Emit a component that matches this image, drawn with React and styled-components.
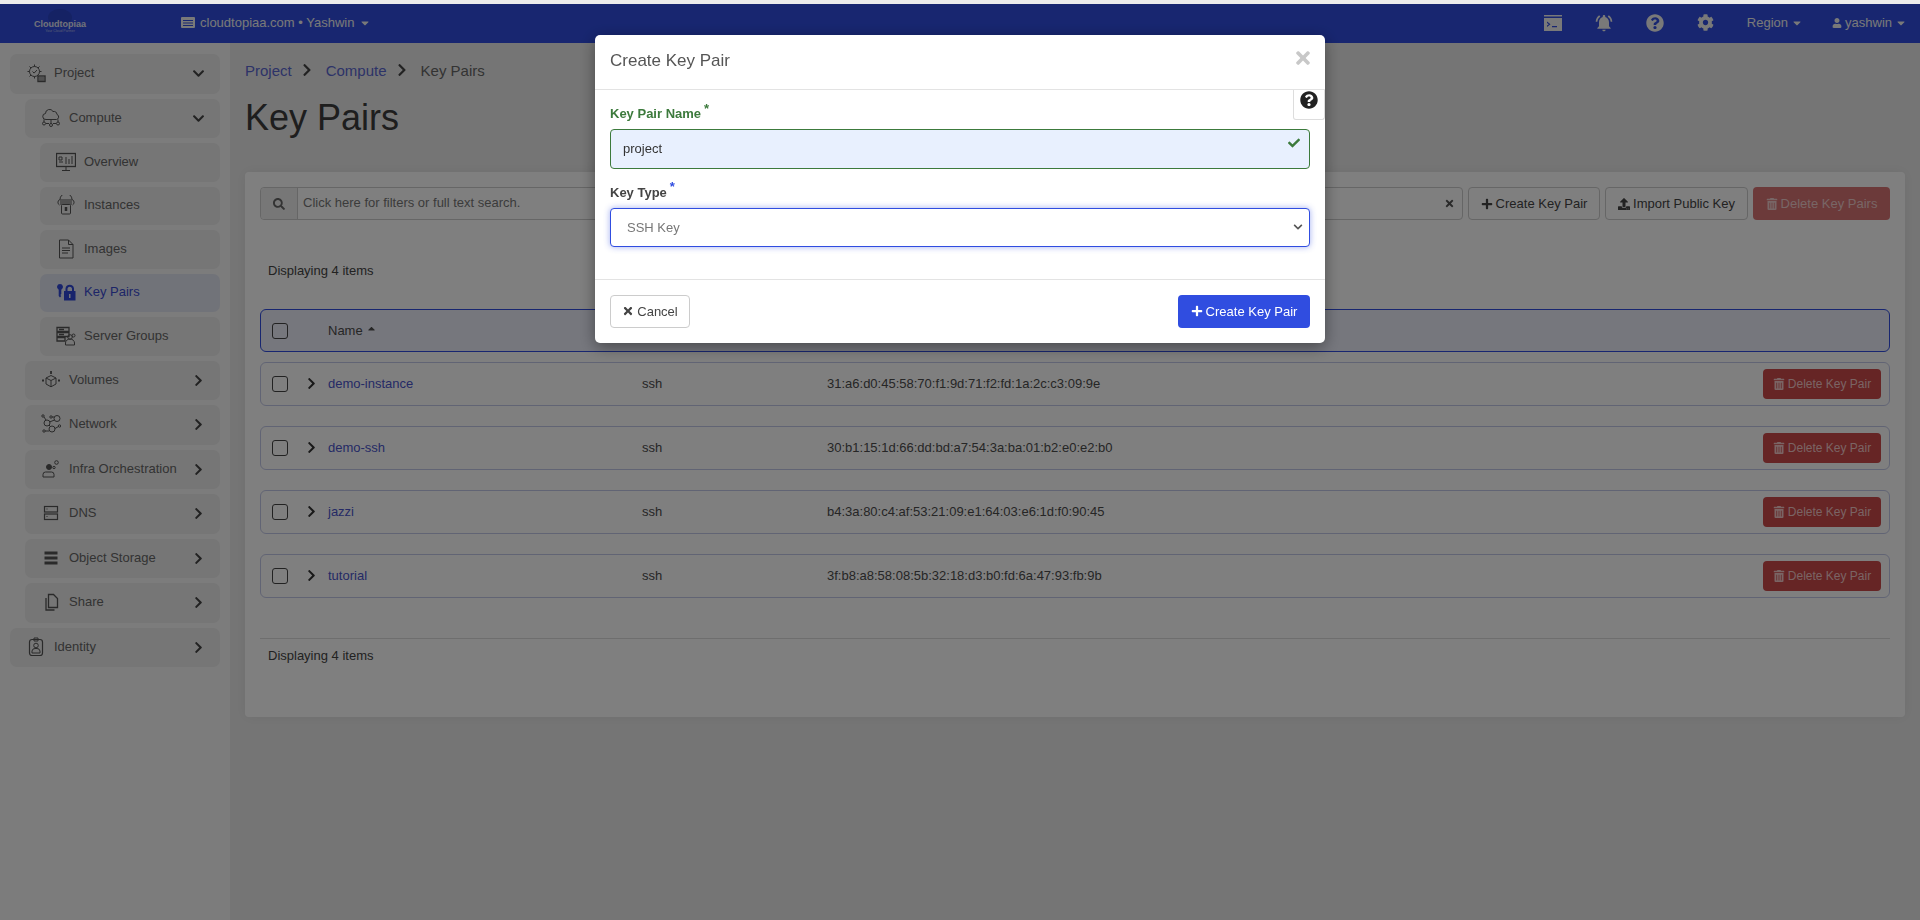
import React from 'react';
import styled, { createGlobalStyle } from 'styled-components';
import {
  FaCaretDown, FaCaretUp, FaCheck, FaChevronDown, FaChevronRight, FaCog, FaPlus,
  FaQuestionCircle, FaSearch, FaTimes, FaTrashAlt, FaUpload, FaUser,
} from 'react-icons/fa';
import { MdNotificationsActive } from 'react-icons/md';

const Global = createGlobalStyle`
  html, body { margin: 0; padding: 0; height: 100%; overflow: hidden; }
  body { font-family: "Liberation Sans", Arial, sans-serif; font-size: 13px; background: #f0f0f0; }
  * { box-sizing: border-box; }
`;

const TopStrip = styled.div`
  height: 4px;
  background: #ececec;
`;

const Navbar = styled.header`
  height: 39px;
  background: #304de0;
  color: #f2f2f2;
  display: flex;
  align-items: center;
  padding: 0 13px 2px 34px;
`;

const Logo = styled.div`
  position: relative;
  width: 52px;
  margin-top: 8px;
  text-align: center;
  line-height: 1;
  &::before {
    content: '';
    position: absolute;
    left: 14px;
    top: -11px;
    width: 24px;
    height: 17px;
    border-radius: 50%;
    background: #2a44c8;
  }
`;

const LogoName = styled.div`
  position: relative;
  font-size: 9px;
  font-weight: 700;
  color: #e4e6f4;
`;

const LogoTag = styled.div`
  position: relative;
  font-size: 3.5px;
  margin-top: 1px;
  color: #b4bcea;
`;

const Project = styled.div`
  display: flex;
  align-items: center;
  gap: 5px;
  margin-left: 95px;
`;

const NavRight = styled.div`
  margin-left: auto;
  display: flex;
  align-items: center;
`;

const NavIcon = styled.span`
  display: flex;
  align-items: center;
  justify-content: center;
  width: 20px;
  margin-right: ${(p) => p.$gap}px;
  font-size: 18px;
`;

const NavMenu = styled.div`
  display: flex;
  align-items: center;
  gap: 3px;
  margin-left: ${(p) => p.$left || 0}px;
`;

const Body = styled.div`
  display: grid;
  grid-template-columns: 230px 1fr;
  height: calc(100vh - 43px);
`;

const Sidebar = styled.nav`
  background: #f8f8f8;
  padding: 11px 10px 0;
  display: flex;
  flex-direction: column;
  gap: 5px;
`;

const NavItem = styled.div`
  height: ${(p) => (p.$level === 2 ? 38.5 : 39.5)}px;
  margin-left: ${(p) => p.$level * 15}px;
  padding: 0 16px 2px;
  border-radius: 7px;
  background: ${(p) => (p.$active ? '#e2e6f2' : '#ececec')};
  color: ${(p) => (p.$active ? '#3a4bd0' : '#666')};
  display: flex;
  align-items: center;
  gap: 8px;
  svg.side { width: 20px; height: 20px; flex: none; margin-top: 1px; color: ${(p) => (p.$active ? '#3049d8' : '#555')}; }
`;

const NavLabel = styled.span`
  flex: 1;
  white-space: nowrap;
`;

const Chevron = styled.span`
  display: flex;
  margin: 2px -1px 0 0;
  color: #444;
  font-size: 13px;
`;

const Main = styled.main`
  background: #ebebeb;
  padding: 17px 15px 0;
`;

const Crumbs = styled.div`
  display: flex;
  align-items: center;
  height: 20px;
  font-size: 15px;
  color: #666;
`;

const Crumb = styled.a`
  color: #5a66d0;
`;

const CrumbSep = styled.span`
  display: flex;
  margin: 0 12px 0 8px;
  font-size: 14px;
  color: #444;
`;

const Title = styled.h1`
  margin: 18px 0 0;
  font-size: 36px;
  line-height: 40px;
  font-weight: 400;
  color: #3c3c3c;
`;

const Panel = styled.section`
  margin-top: 34px;
  height: 545px;
  background: #fff;
  border-radius: 4px;
  padding: 15px;
  box-shadow: 0 0 14px rgba(0, 0, 0, 0.06);
`;

const Toolbar = styled.div`
  display: flex;
  gap: 5px;
  height: 33px;
`;

const SearchGroup = styled.div`
  flex: 1;
  display: flex;
  align-items: center;
  border: 1px solid #ccc;
  border-radius: 4px;
  color: #777;
  padding-right: 7px;
`;

const SearchAddon = styled.span`
  width: 37px;
  align-self: stretch;
  display: flex;
  align-items: center;
  justify-content: center;
  background: #eee;
  border-right: 1px solid #ccc;
  border-radius: 4px 0 0 4px;
  color: #666;
  font-size: 12px;
`;

const SearchInput = styled.input`
  flex: 1;
  border: 0;
  outline: 0;
  padding: 0 5px;
  background: transparent;
  font: 13px "Liberation Sans", Arial, sans-serif;
  margin-top: -2px;
  &::placeholder { color: #777; opacity: 1; }
`;

const ClearIcon = styled.span`
  display: flex;
  color: #555;
  font-size: 11px;
`;

const Button = styled.button`
  display: inline-flex;
  align-items: center;
  justify-content: center;
  gap: 3px;
  height: ${(p) => p.$h || 33}px;
  width: ${(p) => p.$w}px;
  padding: 0;
  border-radius: 4px;
  border: 1px solid ${(p) => (p.$kind === 'default' ? '#ccc' : 'transparent')};
  font: ${(p) => p.$size || 13}px "Liberation Sans", Arial, sans-serif;
  color: ${(p) => (p.$kind === 'default' ? '#444' : '#fff')};
  background: ${(p) =>
    p.$kind === 'primary' ? '#304de0'
      : p.$kind === 'danger' ? '#d9534f'
        : p.$kind === 'soft' ? '#d87474' : '#fff'};
  svg { flex: none; font-size: 12px; }
`;

const DeleteAll = styled(Button)`
  color: #f0cccc;
`;

const RowDelete = styled(Button)`
  background: #cc4a4a;
  color: #f4c8c8;
`;

const Count = styled.div`
  margin: ${(p) => p.$top}px 0 0 8px;
  line-height: 16px;
  color: #444;
`;

const Row = styled.div`
  display: grid;
  grid-template-columns: 35px 21px 314px 185px 1fr auto;
  align-items: center;
  height: 43.5px;
  margin-bottom: 20.5px;
  padding: 0 8px 0 11px;
  border: 1px solid #c3c9e8;
  border-radius: 6px;
  color: #4c4c4c;
  font-size: 13px;
`;

const HeadRow = styled(Row)`
  height: 43px;
  margin-top: 30px;
  margin-bottom: 10px;
  border-color: #304de0;
  background: #eceefa;
`;

const Check = styled.input.attrs({ type: 'checkbox' })`
  appearance: none;
  width: 16px;
  height: 16px;
  margin: 0;
  border: 1.5px solid #444;
  border-radius: 3px;
  background: transparent;
`;

const Expand = styled.span`
  display: flex;
  color: #333;
  font-size: 13px;
  margin-left: -2px;
`;

const NameLink = styled.a`
  color: #4a55cc;
`;

const SortName = styled.span`
  grid-column: 3;
  display: flex;
  align-items: center;
  gap: 3px;
  svg { font-size: 11px; margin-top: -5px; }
`;

const Divider = styled.div`
  border-top: 1px solid #ddd;
  margin-top: 40px;
`;

const Overlay = styled.div`
  position: fixed;
  inset: 4px 0 0;
  background: rgba(0, 0, 0, 0.5);
  display: flex;
  justify-content: center;
  align-items: flex-start;
`;

const Modal = styled.div`
  position: relative;
  width: 730px;
  margin-top: 31px;
  background: #fff;
  border-radius: 5px;
  box-shadow: 0 4px 16px rgba(0, 0, 0, 0.4);
`;

const ModalHead = styled.div`
  height: 55px;
  padding: 0 15px 3px;
  border-bottom: 1px solid #e3e3e3;
  display: flex;
  align-items: center;
  justify-content: space-between;
`;

const ModalTitle = styled.h4`
  margin: 0;
  font-size: 17px;
  font-weight: 400;
  color: #555;
`;

const Close = styled.span`
  display: flex;
  margin: -6px -3px 0 0;
  color: #c8c8c8;
  font-size: 20px;
`;

const HelpTab = styled.div`
  position: absolute;
  top: 55px;
  right: 0;
  width: 32px;
  height: 30px;
  border: 1px solid #ddd;
  border-top: 0;
  border-radius: 0 0 3px 3px;
  display: flex;
  justify-content: center;
  padding-top: 1px;
  font-size: 18px;
  color: #222;
`;

const ModalBody = styled.div`
  padding: 15px 15px 32px;
`;

const Label = styled.label`
  display: block;
  height: 24px;
  line-height: 18px;
  font-weight: 700;
  color: ${(p) => (p.$ok ? '#3c7a3c' : '#444')};
  sup {
    font-size: 13px;
    line-height: 0;
    margin-left: 3px;
    color: ${(p) => (p.$ok ? '#3c7a3c' : '#304de0')};
  }
`;

const FieldWrap = styled.div`
  position: relative;
  margin-bottom: ${(p) => p.$mb || 0}px;
`;

const TextInput = styled.input`
  display: block;
  width: 100%;
  height: 39.5px;
  padding: 0 12px;
  border: 1px solid #3c7a3c;
  border-radius: 4px;
  outline: 0;
  background: #e8f0fe;
  color: #333;
  font: 13px "Liberation Sans", Arial, sans-serif;
`;

const OkMark = styled.span`
  position: absolute;
  top: 8px;
  right: 10px;
  display: flex;
  color: #3c7a3c;
  font-size: 12px;
`;

const Select = styled.select`
  display: block;
  width: 100%;
  height: 39px;
  padding: 0 16px;
  appearance: none;
  border: 1px solid #304de0;
  border-radius: 4px;
  outline: 0;
  background: #fff;
  color: #777;
  font: 13px "Liberation Sans", Arial, sans-serif;
  box-shadow: 0 0 6px rgba(48, 77, 224, 0.45);
`;

const SelectArrow = styled.span`
  position: absolute;
  top: 14px;
  right: 7px;
  display: flex;
  color: #555;
  font-size: 10px;
`;

const ModalFoot = styled.div`
  height: 64px;
  padding: 15px 15px 0;
  border-top: 1px solid #e3e3e3;
  display: flex;
  justify-content: space-between;
  align-items: flex-start;
`;

const Svg = ({ children, fill }) => (
  <svg className="side" viewBox="0 0 20 20" fill={fill || 'none'} stroke={fill ? 'none' : 'currentColor'} strokeWidth="1">
    {children}
  </svg>
);

const icons = {
  project: (
    <Svg>
      <circle cx="8.500" cy="8.500" r="5" />
      <path d="M6.500 8.500l1.600 1.600 2.800-3M8.500 1.500v2M8.500 13.500v2M1.500 8.500h2M13.500 8.500h2M3.500 3.500l1.500 1.500M13.500 3.500l-1.500 1.500M3.500 13.500l1.500-1.500" />
      <rect x="12" y="13" width="7" height="5.500" strokeWidth="1.400" />
      <path d="M13 15h5M13 17h5" />
    </Svg>
  ),
  compute: (
    <Svg>
      <path d="M5 11.500a3 3 0 0 1-.5-6 4 4 0 0 1 7.500-2 3.500 3.500 0 0 1 4 3 2.600 2.600 0 0 1-.5 5z" />
      <path d="M3 11.500v2.500M10 11.500v4M17 11.500v2.500M5 15.500h3M12 15.500h3" />
      <circle cx="3" cy="15.500" r="1.500" /><circle cx="10" cy="17" r="1.500" /><circle cx="17" cy="15.500" r="1.500" />
    </Svg>
  ),
  overview: (
    <Svg>
      <rect x="0.500" y="1.500" width="19" height="13" strokeWidth="1.300" />
      <path d="M3 5h3v3H3zM3 10h4M10 12V5M13 12V7M16 12V4M6 18.500h8M10 14.500v4" />
    </Svg>
  ),
  instances: (
    <Svg>
      <path d="M3.500 10a3 3 0 0 1 .5-5.500 6 6 0 0 1 12 0 3 3 0 0 1 .5 5.500" />
      <path d="M4 5h12M4 7h12M4 9h12" strokeWidth="1.200" />
      <rect x="5.500" y="9.500" width="9" height="9.500" rx="1" />
      <path d="M10 12v4" strokeWidth="2.500" />
    </Svg>
  ),
  images: (
    <Svg>
      <path d="M3.500 1h9l4.500 4.500V19h-13.500z" />
      <path d="M12.500 1v4.500H17M6 9h8M6 11.500h8M6 14h6" />
    </Svg>
  ),
  keypairs: (
    <Svg fill="currentColor">
      <path d="M4 2a3 3 0 0 1 1.300 5.700V12l-1 1 1 1-1.300 1.500L2.700 14V7.700A3 3 0 0 1 4 2z" />
      <path d="M9.500 9V6.500a4.300 4.300 0 0 1 8.500 0V9h-2V6.500a2.300 2.300 0 0 0-4.500 0V9z" />
      <path fillRule="evenodd" d="M8 9h11.500v9.500H8zM13 12v4h1.500v-4z" />
    </Svg>
  ),
  servers: (
    <Svg>
      <path d="M1 1.500h12v4H1zM1 6.500h12v4H1zM1 11.500h8v3.500H1z" strokeWidth="1.300" />
      <path d="M3 3.500h5M3 8.500h5" strokeWidth="1.300" />
      <circle cx="14" cy="11" r="2.300" />
      <path d="M9.500 19v-2a4.500 4 0 0 1 9 0v2z" />
      <circle cx="17.500" cy="9.500" r="1.500" />
    </Svg>
  ),
  volumes: (
    <Svg>
      <path d="M10 5.500l5 2.500v6l-5 2.800L5 14V8zM5 8l5 2.500L15 8M10 10.500v6" />
      <path d="M10 1v3M1 10.500h2M17 10.500h2" strokeWidth="1.800" />
    </Svg>
  ),
  network: (
    <Svg>
      <circle cx="16" cy="4.500" r="3" /><circle cx="6" cy="9" r="3" /><circle cx="11" cy="15" r="3" />
      <circle cx="2" cy="2" r="1.200" /><circle cx="10" cy="3" r="1.200" /><circle cx="18.500" cy="12" r="1.200" /><circle cx="3" cy="17" r="1.200" />
      <path d="M3 3l2 3M11 3h2.500M8.500 8l5-2M8 11l1.500 1.500M14 14.500l3.500-2M4 17h4" />
    </Svg>
  ),
  infra: (
    <Svg>
      <circle cx="8" cy="8" r="2.500" fill="currentColor" />
      <path d="M2 18v-2.500a2.500 2.500 0 0 1 2.500-2.500h6a2.500 2.500 0 0 1 2.500 2.500V18z" />
      <circle cx="15.500" cy="3.500" r="1.800" /><circle cx="13" cy="8.500" r="1.200" />
    </Svg>
  ),
  dns: (
    <Svg>
      <rect x="3.500" y="3.500" width="13" height="5.500" strokeWidth="1.200" />
      <rect x="3.500" y="11" width="13" height="5.500" strokeWidth="1.200" />
      <path d="M5.500 6h1M5.500 13.500h1" />
    </Svg>
  ),
  storage: (
    <Svg fill="currentColor">
      <path d="M3.500 3.500h13v3h-13zM3.500 8.500h13v3h-13zM3.500 13.500h13v3h-13z" />
    </Svg>
  ),
  share: (
    <Svg>
      <path d="M7.500 2.500h5l4 4v9h-9z" strokeWidth="1.300" />
      <path d="M5 6v12h8.500" strokeWidth="1.300" />
    </Svg>
  ),
  identity: (
    <Svg>
      <rect x="3.500" y="2.500" width="13" height="16" rx="2.500" strokeWidth="1.200" />
      <path d="M8 1h4v3H8z" />
      <circle cx="10" cy="8.500" r="2.300" />
      <path d="M6 16v-2a3 3 0 0 1 3-2.500h2a3 3 0 0 1 3 2.500v2z" />
    </Svg>
  ),
};

const menu = [
  { label: 'Project', icon: 'project', level: 0, open: true },
  { label: 'Compute', icon: 'compute', level: 1, open: true },
  { label: 'Overview', icon: 'overview', level: 2, leaf: true },
  { label: 'Instances', icon: 'instances', level: 2, leaf: true },
  { label: 'Images', icon: 'images', level: 2, leaf: true },
  { label: 'Key Pairs', icon: 'keypairs', level: 2, leaf: true, active: true },
  { label: 'Server Groups', icon: 'servers', level: 2, leaf: true },
  { label: 'Volumes', icon: 'volumes', level: 1 },
  { label: 'Network', icon: 'network', level: 1 },
  { label: 'Infra Orchestration', icon: 'infra', level: 1 },
  { label: 'DNS', icon: 'dns', level: 1 },
  { label: 'Object Storage', icon: 'storage', level: 1 },
  { label: 'Share', icon: 'share', level: 1 },
  { label: 'Identity', icon: 'identity', level: 0 },
];

const keyPairs = [
  { name: 'demo-instance', fingerprint: '31:a6:d0:45:58:70:f1:9d:71:f2:fd:1a:2c:c3:09:9e' },
  { name: 'demo-ssh', fingerprint: '30:b1:15:1d:66:dd:bd:a7:54:3a:ba:01:b2:e0:e2:b0' },
  { name: 'jazzi', fingerprint: 'b4:3a:80:c4:af:53:21:09:e1:64:03:e6:1d:f0:90:45' },
  { name: 'tutorial', fingerprint: '3f:b8:a8:58:08:5b:32:18:d3:b0:fd:6a:47:93:fb:9b' },
];

const TerminalIcon = () => (
  <svg width="18" height="16" viewBox="0 0 18 16" fill="currentColor">
    <path fillRule="evenodd" d="M0 0h18v1.500H0zM0 3h18v13H0zM3 6.500l3.500 2.700L3 12v-1.400l1.800-1.400L3 7.900zM8 11h5v1.300H8z" />
  </svg>
);

const ProjectIcon = () => (
  <svg width="14" height="11" viewBox="0 0 14 11" fill="currentColor">
    <path fillRule="evenodd" d="M1 0h12a1 1 0 0 1 1 1v9a1 1 0 0 1-1 1H1a1 1 0 0 1-1-1V1a1 1 0 0 1 1-1zM2 3v1h10V3zM2 5.500v1h10v-1zM2 8v1h10V8z" />
  </svg>
);

export default function App() {
  return (
    <>
      <Global />
      <TopStrip />
      <Navbar>
        <Logo>
          <LogoName>Cloudtopiaa</LogoName>
          <LogoTag>Your Cloud Partner</LogoTag>
        </Logo>
        <Project>
          <ProjectIcon />
          <span>cloudtopiaa.com • Yashwin</span>
          <FaCaretDown size={12} />
        </Project>
        <NavRight>
          <NavIcon $gap={31}><TerminalIcon /></NavIcon>
          <NavIcon $gap={31}><MdNotificationsActive size={20} /></NavIcon>
          <NavIcon $gap={31}><FaQuestionCircle size={18} /></NavIcon>
          <NavIcon $gap={0}><FaCog size={17} /></NavIcon>
          <NavMenu $left={31}>Region <FaCaretDown size={12} /></NavMenu>
          <NavMenu $left={29}><FaUser size={10} /> yashwin <FaCaretDown size={12} /></NavMenu>
        </NavRight>
      </Navbar>
      <Body>
        <Sidebar>
          {menu.map((m) => (
            <NavItem key={m.label} $level={m.level} $active={m.active}>
              {icons[m.icon]}
              <NavLabel>{m.label}</NavLabel>
              {!m.leaf && <Chevron>{m.open ? <FaChevronDown /> : <FaChevronRight />}</Chevron>}
            </NavItem>
          ))}
        </Sidebar>
        <Main>
          <Crumbs>
            <Crumb>Project</Crumb>
            <CrumbSep><FaChevronRight /></CrumbSep>
            <Crumb>Compute</Crumb>
            <CrumbSep><FaChevronRight /></CrumbSep>
            <span>Key Pairs</span>
          </Crumbs>
          <Title>Key Pairs</Title>
          <Panel>
            <Toolbar>
              <SearchGroup>
                <SearchAddon><FaSearch /></SearchAddon>
                <SearchInput placeholder="Click here for filters or full text search." />
                <ClearIcon><FaTimes /></ClearIcon>
              </SearchGroup>
              <Button $kind="default" $w={132}><FaPlus /> Create Key Pair</Button>
              <Button $kind="default" $w={143}><FaUpload /> Import Public Key</Button>
              <DeleteAll $kind="soft" $w={137}><FaTrashAlt /> Delete Key Pairs</DeleteAll>
            </Toolbar>
            <Count $top={43}>Displaying 4 items</Count>
            <HeadRow>
              <Check />
              <SortName>Name <FaCaretUp /></SortName>
            </HeadRow>
            {keyPairs.map((k) => (
              <Row key={k.name}>
                <Check />
                <Expand><FaChevronRight /></Expand>
                <NameLink>{k.name}</NameLink>
                <span>ssh</span>
                <span>{k.fingerprint}</span>
                <RowDelete $kind="danger" $w={118} $h={30} $size={12}><FaTrashAlt /> Delete Key Pair</RowDelete>
              </Row>
            ))}
            <Divider />
            <Count $top={9}>Displaying 4 items</Count>
          </Panel>
        </Main>
      </Body>
      <Overlay>
        <Modal>
          <ModalHead>
            <ModalTitle>Create Key Pair</ModalTitle>
            <Close><FaTimes /></Close>
          </ModalHead>
          <HelpTab><FaQuestionCircle /></HelpTab>
          <ModalBody>
            <Label $ok>Key Pair Name<sup>*</sup></Label>
            <FieldWrap $mb={15}>
              <TextInput defaultValue="project" />
              <OkMark><FaCheck /></OkMark>
            </FieldWrap>
            <Label>Key Type<sup>*</sup></Label>
            <FieldWrap>
              <Select defaultValue="ssh">
                <option value="ssh">SSH Key</option>
              </Select>
              <SelectArrow><FaChevronDown /></SelectArrow>
            </FieldWrap>
          </ModalBody>
          <ModalFoot>
            <Button $kind="default" $w={80}><FaTimes /> Cancel</Button>
            <Button $kind="primary" $w={132}><FaPlus /> Create Key Pair</Button>
          </ModalFoot>
        </Modal>
      </Overlay>
    </>
  );
}
